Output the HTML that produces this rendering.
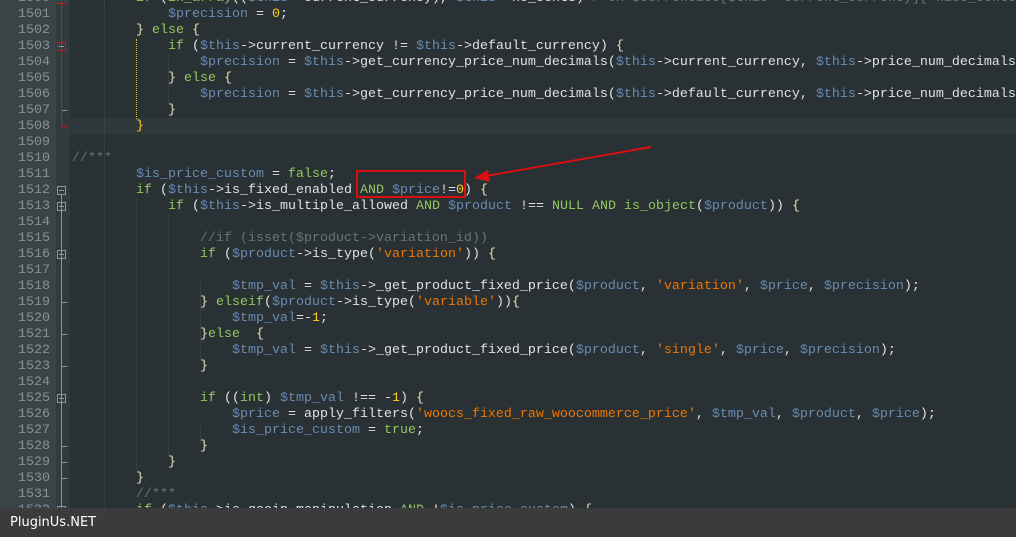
<!DOCTYPE html>
<html><head><meta charset="utf-8"><style>
html,body{margin:0;padding:0;}
body{width:1016px;height:537px;overflow:hidden;background:#293134;position:relative;font-family:"Liberation Mono",monospace;}
#gut{position:absolute;left:0;top:0;width:56px;height:537px;background:#3b4346;}
#fold{position:absolute;left:56px;top:0;width:14px;height:537px;background:#323a3d;}
#cur{position:absolute;left:70px;top:118px;width:946px;height:16px;background:#2f393c;}
#w{position:absolute;left:0;top:2px;width:1016px;height:506px;}
.ln{position:absolute;left:0;width:50px;text-align:right;font-size:13.33px;line-height:16px;color:#8593999;color:#859399;white-space:pre;}
.cd{position:absolute;left:72px;font-size:13.33px;line-height:16px;color:#e0e2e4;white-space:pre;}
.k{color:#93c763}.v{color:#678cb1}.s{color:#ec7600}.n{color:#ffcd22}.c{color:#66747b}.b{color:#e8e2b7}
.g{position:absolute;width:0;border-left:1px dotted #3e4a4e;}
.fb{position:absolute;left:57px;width:9px;height:9px;border:1px solid #8a989d;box-sizing:border-box;}
.fb:after{content:"";position:absolute;left:1px;top:3px;width:5px;height:1px;background:#8a989d;}
.tk{position:absolute;left:62px;width:5px;height:1px;background:#8a989d;}
.vl{position:absolute;left:61px;width:1px;background:#8a989d;}
#bar{position:absolute;left:0;top:508px;width:1016px;height:29px;background:#3b3b3b;color:#fff;font-family:"DejaVu Sans","Liberation Sans",sans-serif;font-size:13px;line-height:29px;padding-left:10px;box-sizing:border-box;}
</style></head><body>
<div id="gut"></div><div id="fold"></div><div id="cur"></div>
<div class="g" style="left:104px;top:0;height:508px"></div>
<div class="g" style="left:136px;top:199px;height:270px"></div>
<div class="g" style="left:168px;top:215px;height:240px"></div>
<div class="g" style="left:200px;top:279px;height:80px;"></div>
<div class="g" style="left:200px;top:423px;height:20px;"></div>
<div class="g" style="left:168px;top:55px;height:48px"></div>
<div style="position:absolute;left:136px;top:39px;height:80px;border-left:1px dotted #d8c040"></div>
<div class="vl" style="top:0;height:127px;background:#e01010"></div>
<div class="fb" style="top:-5px;border-color:#e01010"></div>
<div class="fb" style="top:42px;border-color:#e01010"></div>
<div class="tk" style="top:110px"></div>
<div class="tk" style="top:126px;background:#e01010"></div>
<div class="vl" style="top:195px;height:313px"></div>
<div class="fb" style="top:186px"></div>
<div class="fb" style="top:202px"></div>
<div class="fb" style="top:250px"></div>
<div class="tk" style="top:302px"></div>
<div class="tk" style="top:334px"></div>
<div class="tk" style="top:366px"></div>
<div class="fb" style="top:394px"></div>
<div class="tk" style="top:446px"></div>
<div class="tk" style="top:462px"></div>
<div class="tk" style="top:478px"></div>
<div class="fb" style="top:506px"></div>
<div id="w">
<div class="ln" style="top:-11px">1500</div><div class="cd" style="top:-11px">        <span class="k">if</span> (<span class="k">in_array</span>((<span class="v">$this</span>-&gt;current_currency), <span class="v">$this</span>-&gt;no_cents) <span class="c">/*OR $currencies[$this-&gt;current_currency]['hide_cents']</span></div>
<div class="ln" style="top:5px">1501</div><div class="cd" style="top:5px">            <span class="v">$precision</span> = <span class="n">0</span>;</div>
<div class="ln" style="top:21px">1502</div><div class="cd" style="top:21px">        <span class="b">}</span> <span class="k">else</span> <span class="b">{</span></div>
<div class="ln" style="top:37px">1503</div><div class="cd" style="top:37px">            <span class="k">if</span> (<span class="v">$this</span>-&gt;current_currency != <span class="v">$this</span>-&gt;default_currency) <span class="b">{</span></div>
<div class="ln" style="top:53px">1504</div><div class="cd" style="top:53px">                <span class="v">$precision</span> = <span class="v">$this</span>-&gt;get_currency_price_num_decimals(<span class="v">$this</span>-&gt;current_currency, <span class="v">$this</span>-&gt;price_num_decimals</div>
<div class="ln" style="top:69px">1505</div><div class="cd" style="top:69px">            <span class="b">}</span> <span class="k">else</span> <span class="b">{</span></div>
<div class="ln" style="top:85px">1506</div><div class="cd" style="top:85px">                <span class="v">$precision</span> = <span class="v">$this</span>-&gt;get_currency_price_num_decimals(<span class="v">$this</span>-&gt;default_currency, <span class="v">$this</span>-&gt;price_num_decimals</div>
<div class="ln" style="top:101px">1507</div><div class="cd" style="top:101px">            <span class="b">}</span></div>
<div class="ln" style="top:117px">1508</div><div class="cd" style="top:117px">        <span class="n">}</span></div>
<div class="ln" style="top:133px">1509</div>
<div class="ln" style="top:149px">1510</div><div class="cd" style="top:149px"><span class="c">//***</span></div>
<div class="ln" style="top:165px">1511</div><div class="cd" style="top:165px">        <span class="v">$is_price_custom</span> = <span class="k">false</span>;</div>
<div class="ln" style="top:181px">1512</div><div class="cd" style="top:181px">        <span class="k">if</span> (<span class="v">$this</span>-&gt;is_fixed_enabled <span class="k">AND</span> <span class="v">$price</span>!=<span class="n">0</span>) <span class="b">{</span></div>
<div class="ln" style="top:197px">1513</div><div class="cd" style="top:197px">            <span class="k">if</span> (<span class="v">$this</span>-&gt;is_multiple_allowed <span class="k">AND</span> <span class="v">$product</span> !== <span class="k">NULL</span> <span class="k">AND</span> <span class="k">is_object</span>(<span class="v">$product</span>)) <span class="b">{</span></div>
<div class="ln" style="top:213px">1514</div>
<div class="ln" style="top:229px">1515</div><div class="cd" style="top:229px">                <span class="c">//if (isset($product-&gt;variation_id))</span></div>
<div class="ln" style="top:245px">1516</div><div class="cd" style="top:245px">                <span class="k">if</span> (<span class="v">$product</span>-&gt;is_type(<span class="s">'variation'</span>)) <span class="b">{</span></div>
<div class="ln" style="top:261px">1517</div>
<div class="ln" style="top:277px">1518</div><div class="cd" style="top:277px">                    <span class="v">$tmp_val</span> = <span class="v">$this</span>-&gt;_get_product_fixed_price(<span class="v">$product</span>, <span class="s">'variation'</span>, <span class="v">$price</span>, <span class="v">$precision</span>);</div>
<div class="ln" style="top:293px">1519</div><div class="cd" style="top:293px">                <span class="b">}</span> <span class="k">elseif</span>(<span class="v">$product</span>-&gt;is_type(<span class="s">'variable'</span>))<span class="b">{</span></div>
<div class="ln" style="top:309px">1520</div><div class="cd" style="top:309px">                    <span class="v">$tmp_val</span>=-<span class="n">1</span>;</div>
<div class="ln" style="top:325px">1521</div><div class="cd" style="top:325px">                <span class="b">}</span><span class="k">else</span>  <span class="b">{</span></div>
<div class="ln" style="top:341px">1522</div><div class="cd" style="top:341px">                    <span class="v">$tmp_val</span> = <span class="v">$this</span>-&gt;_get_product_fixed_price(<span class="v">$product</span>, <span class="s">'single'</span>, <span class="v">$price</span>, <span class="v">$precision</span>);</div>
<div class="ln" style="top:357px">1523</div><div class="cd" style="top:357px">                <span class="b">}</span></div>
<div class="ln" style="top:373px">1524</div>
<div class="ln" style="top:389px">1525</div><div class="cd" style="top:389px">                <span class="k">if</span> ((<span class="k">int</span>) <span class="v">$tmp_val</span> !== -<span class="n">1</span>) <span class="b">{</span></div>
<div class="ln" style="top:405px">1526</div><div class="cd" style="top:405px">                    <span class="v">$price</span> = apply_filters(<span class="s">'woocs_fixed_raw_woocommerce_price'</span>, <span class="v">$tmp_val</span>, <span class="v">$product</span>, <span class="v">$price</span>);</div>
<div class="ln" style="top:421px">1527</div><div class="cd" style="top:421px">                    <span class="v">$is_price_custom</span> = <span class="k">true</span>;</div>
<div class="ln" style="top:437px">1528</div><div class="cd" style="top:437px">                <span class="b">}</span></div>
<div class="ln" style="top:453px">1529</div><div class="cd" style="top:453px">            <span class="b">}</span></div>
<div class="ln" style="top:469px">1530</div><div class="cd" style="top:469px">        <span class="b">}</span></div>
<div class="ln" style="top:485px">1531</div><div class="cd" style="top:485px">        <span class="c">//***</span></div>
<div class="ln" style="top:501px">1532</div><div class="cd" style="top:501px">        <span class="k">if</span> (<span class="v">$this</span>-&gt;is_geoip_manipulation <span class="k">AND</span> !<span class="v">$is_price_custom</span>) <span class="b">{</span></div>
</div>
<div style="position:absolute;left:356px;top:170px;width:110px;height:28px;border:2px solid #d81010;box-sizing:border-box"></div>
<svg style="position:absolute;left:0;top:0" width="1016" height="537"><line x1="651" y1="147" x2="486" y2="176" stroke="#d81010" stroke-width="2"/><polygon points="474,178 488,170 490,182" fill="#d81010"/></svg>
<div id="bar">PluginUs.NET</div>
</body></html>
